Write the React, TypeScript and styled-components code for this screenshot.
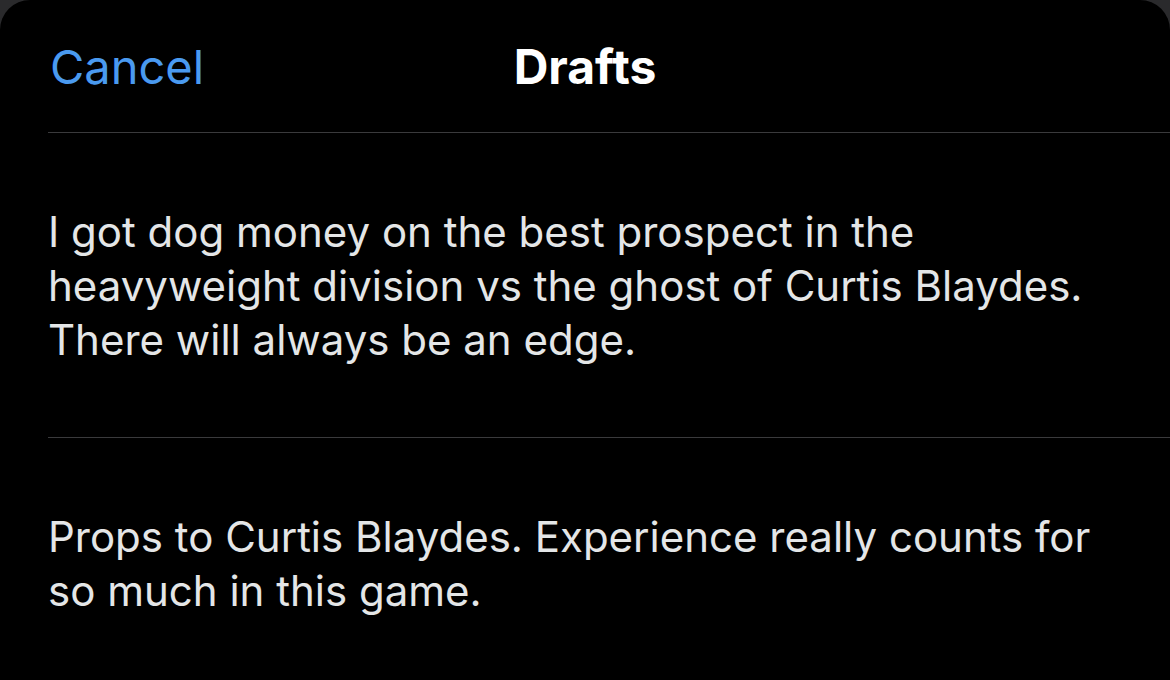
import React from 'react'
import styled, { createGlobalStyle } from 'styled-components'

const GlobalStyle = createGlobalStyle`
  html, body {
    margin: 0;
    padding: 0;
    background: #2a2a2c;
  }
  body {
    font-family: Inter, 'Open Sans', sans-serif;
    -webkit-font-smoothing: antialiased;
  }
`

const Sheet = styled.div`
  width: 1170px;
  height: 680px;
  background: #000;
  border-radius: 30px 30px 0 0;
  overflow: hidden;
`

const Header = styled.header`
  display: grid;
  grid-template-columns: 1fr auto 1fr;
  align-items: center;
  height: 132px;
  padding: 0 50px;
`

const CancelButton = styled.button`
  justify-self: start;
  background: none;
  border: 0;
  padding: 0;
  font-family: Inter, sans-serif;
  font-size: 47px;
  font-weight: 400;
  color: #4a9af0;
  cursor: pointer;
`

const Title = styled.h1`
  margin: 0;
  font-family: Inter, sans-serif;
  font-size: 48px;
  font-weight: 700;
  color: #fff;
`

const List = styled.ul`
  list-style: none;
  margin: 0;
  padding: 0 0 0 48px;
`

const Item = styled.li`
  border-top: 1px solid #3a3a3c;
  padding: 72px 40px 70px 0;
`

const Body = styled.p`
  margin: 0;
  font-family: Inter, sans-serif;
  font-size: 42px;
  line-height: 54px;
  color: #e4e6e7;
`

const drafts = [
  'I got dog money on the best prospect in the heavyweight division vs the ghost of Curtis Blaydes. There will always be an edge.',
  'Props to Curtis Blaydes. Experience really counts for so much in this game.',
]

export default function App() {
  return (
    <>
      <GlobalStyle />
      <Sheet>
        <Header>
          <CancelButton>Cancel</CancelButton>
          <Title>Drafts</Title>
          <span />
        </Header>
        <List>
          {drafts.map((text) => (
            <Item key={text}>
              <Body>{text}</Body>
            </Item>
          ))}
        </List>
      </Sheet>
    </>
  )
}
